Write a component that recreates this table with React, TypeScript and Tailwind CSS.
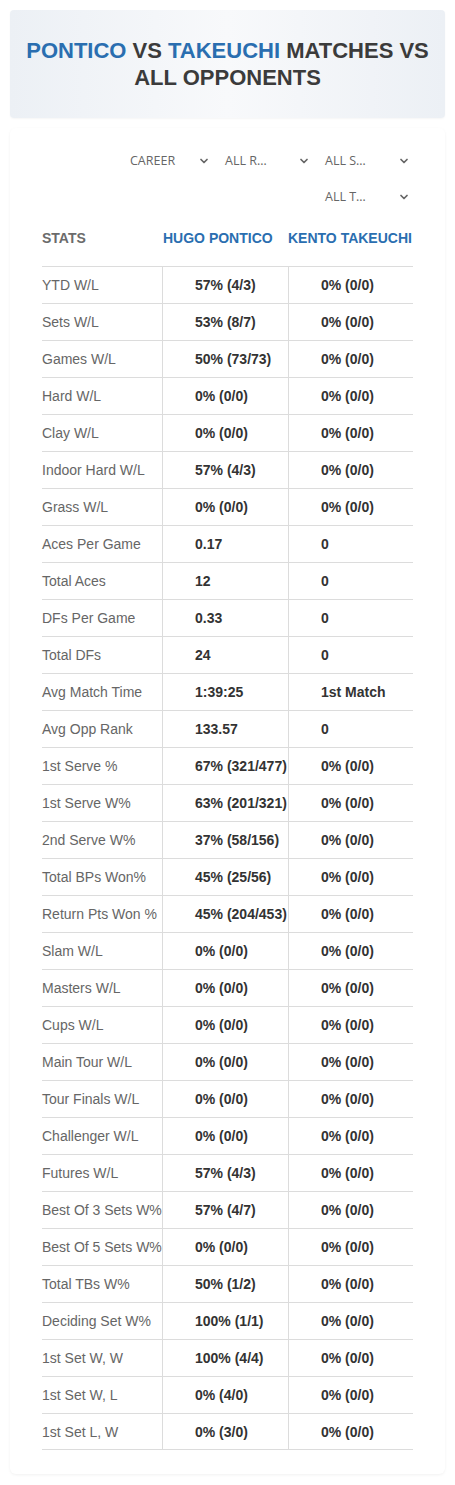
import { ChevronDown } from 'lucide-react';

const rows: [string, string, string][] = [
  ['YTD W/L', '57% (4/3)', '0% (0/0)'],
  ['Sets W/L', '53% (8/7)', '0% (0/0)'],
  ['Games W/L', '50% (73/73)', '0% (0/0)'],
  ['Hard W/L', '0% (0/0)', '0% (0/0)'],
  ['Clay W/L', '0% (0/0)', '0% (0/0)'],
  ['Indoor Hard W/L', '57% (4/3)', '0% (0/0)'],
  ['Grass W/L', '0% (0/0)', '0% (0/0)'],
  ['Aces Per Game', '0.17', '0'],
  ['Total Aces', '12', '0'],
  ['DFs Per Game', '0.33', '0'],
  ['Total DFs', '24', '0'],
  ['Avg Match Time', '1:39:25', '1st Match'],
  ['Avg Opp Rank', '133.57', '0'],
  ['1st Serve %', '67% (321/477)', '0% (0/0)'],
  ['1st Serve W%', '63% (201/321)', '0% (0/0)'],
  ['2nd Serve W%', '37% (58/156)', '0% (0/0)'],
  ['Total BPs Won%', '45% (25/56)', '0% (0/0)'],
  ['Return Pts Won %', '45% (204/453)', '0% (0/0)'],
  ['Slam W/L', '0% (0/0)', '0% (0/0)'],
  ['Masters W/L', '0% (0/0)', '0% (0/0)'],
  ['Cups W/L', '0% (0/0)', '0% (0/0)'],
  ['Main Tour W/L', '0% (0/0)', '0% (0/0)'],
  ['Tour Finals W/L', '0% (0/0)', '0% (0/0)'],
  ['Challenger W/L', '0% (0/0)', '0% (0/0)'],
  ['Futures W/L', '57% (4/3)', '0% (0/0)'],
  ['Best Of 3 Sets W%', '57% (4/7)', '0% (0/0)'],
  ['Best Of 5 Sets W%', '0% (0/0)', '0% (0/0)'],
  ['Total TBs W%', '50% (1/2)', '0% (0/0)'],
  ['Deciding Set W%', '100% (1/1)', '0% (0/0)'],
  ['1st Set W, W', '100% (4/4)', '0% (0/0)'],
  ['1st Set W, L', '0% (4/0)', '0% (0/0)'],
  ['1st Set L, W', '0% (3/0)', '0% (0/0)'],
];

function Select({ label, first }: { label: string; first?: boolean }) {
  return (
    <div className={`flex w-[95px] items-center justify-between pr-[5px] ${first ? 'pl-[10px]' : 'pl-[5px]'}`}>
      <span className="text-[12.5px] text-[#666] font-['Open_Sans',sans-serif]">{label}</span>
      <ChevronDown size={12} strokeWidth={3.5} className="text-[#666]" />
    </div>
  );
}

export default function App() {
  return (
    <div className="min-h-[1485px] bg-white px-[10px] pt-[10px] font-['Liberation_Sans',Arial,sans-serif]">
      {/* Titre */}
      <div className="flex h-[108px] items-center justify-center rounded-[4px] bg-gradient-to-r from-[#ecf0f5] via-[#f8f9fb] to-[#ecf0f5] px-2 shadow-[0_1px_2px_rgba(0,0,0,0.04)]">
        <h1 className="text-center text-[22px] font-bold leading-[27px] text-[#3b3b3b]">
          <span className="text-[#2a6eb0]">PONTICO</span> VS <span className="text-[#2a6eb0]">TAKEUCHI</span> MATCHES VS ALL OPPONENTS
        </h1>
      </div>

      <div className="mt-[10px] rounded-[6px] pb-[24px] pt-[24px] shadow-[0_1px_3px_rgba(0,0,0,0.06)]">
        {/* Filtres */}
        <div className="mr-[30px] flex flex-wrap justify-end gap-x-[5px] gap-y-[17px] pl-[110px]">
          <Select label="CAREER" first />
          <Select label="ALL R…" />
          <Select label="ALL S…" />
          <Select label="ALL T…" />
        </div>

        {/* Tableau */}
        <div className="mx-[32px] mt-[17px] text-[14px]">
          <div className="grid h-[42px] grid-cols-[120px_126px_125px] items-start pt-[4px] font-bold">
            <div className="text-[#6b6b6b]">STATS</div>
            <div className="pl-[1px] text-[#2a6eb0]">HUGO PONTICO</div>
            <div className="text-[#2a6eb0]">KENTO TAKEUCHI</div>
          </div>
          {rows.map(([label, a, b]) => (
            <div key={label} className="grid h-[37px] grid-cols-[120px_126px_125px] border-t border-[#dcdcdc] last:border-b">
              <div className="flex items-center pt-[2px] text-[#666]">{label}</div>
              <div className="flex items-center border-l border-[#dcdcdc] pl-[32px] pt-[2px] font-bold text-[#333]">{a}</div>
              <div className="flex items-center border-l border-[#dcdcdc] pl-[32px] pt-[2px] font-bold text-[#333]">{b}</div>
            </div>
          ))}
        </div>
      </div>
    </div>
  );
}
